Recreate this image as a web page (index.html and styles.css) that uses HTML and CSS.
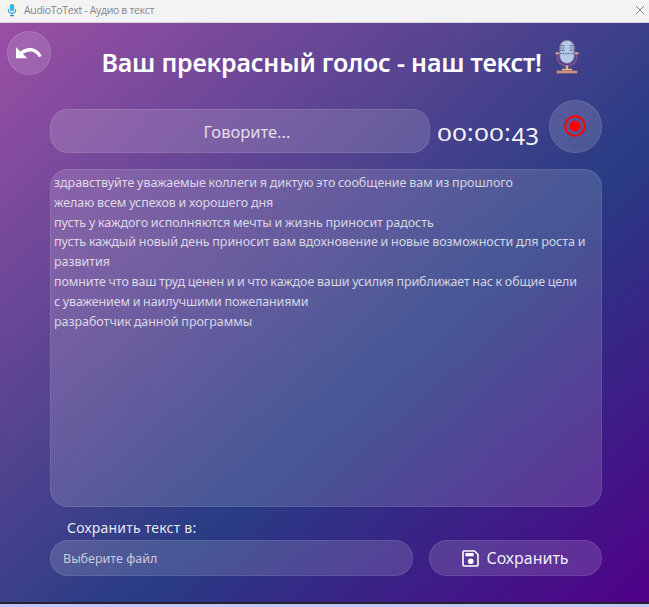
FILE: index.html
```html
<!DOCTYPE html>
<html lang="ru">
<head>
<meta charset="utf-8">
<title>AudioToText - Аудио в текст</title>
<link rel="stylesheet" href="styles.css">
</head>
<body>
<header class="titlebar">
  <svg class="app-icon" viewBox="0 0 12 14"><rect width="12" height="14" rx="2" fill="#fdf7e2"/><rect x="3.7" y="1" width="4.6" height="7.2" rx="2.3" fill="#35b4ed"/><path d="M2.3 6v1a3.7 3.2 0 0 0 7.4 0V6M6 10v2.5M3.8 12.6h4.4" fill="none" stroke="#2a96d8" stroke-width="1.1"/></svg>
  <span class="window-title">AudioToText - Аудио в текст</span>
  <svg class="close" viewBox="0 0 10 10"><path d="M1 1l8 8M9 1L1 9" fill="none" stroke="#858585" stroke-width="1"/></svg>
</header>
<main class="app">
  <div class="heading">
    <button class="back" aria-label="Назад"><svg viewBox="0 0 28 16"><path d="M1 2.2v11h11.2L7.9 9.1C12.5 5.1 20.5 5.2 23.8 12.2L26.7 10.9C22.8 1.9 12 .5 5.4 6.6Z" fill="#fff"/></svg></button>
    <h1>Ваш прекрасный голос - наш текст!</h1>
    <svg class="mic" viewBox="0 0 26 36">
      <path d="M3.2 14v3c0 6 4 9.8 9.8 9.8s9.8-3.8 9.8-9.8v-3" fill="none" stroke="#795493" stroke-width="1.7"/>
      <path d="M1.5 14.2h4M20.5 14.2h4" stroke="#dca18f" stroke-width="2"/>
      <rect x="5.7" y="1.3" width="14.6" height="23.2" rx="7.3" fill="#b5cae6" stroke="#876c9e" stroke-width="1"/>
      <path d="M6 6.6h4.6M6 9h4.6M6 11.4h4.6M15.4 6.6H20M15.4 9H20M15.4 11.4H20" stroke="#76769f" stroke-width="1.1"/>
      <path d="M6 14.5h14" stroke="#68749d" stroke-width="1.4" stroke-dasharray="1.5 1"/>
      <path d="M13 26.5v4M8 31h10" stroke="#edb681" stroke-width="2.4"/>
      <rect x="2.5" y="31.7" width="21" height="2.6" rx="1" fill="#d69b83" stroke="#81577e" stroke-width=".7"/>
    </svg>
  </div>
  <div class="record-row">
    <div class="status glass">Говорите...</div>
    <div class="timer"><span class="zeros">00</span><span class="colon">:</span><span class="zeros">00</span><span class="colon">:</span><span class="low">43</span></div>
    <button class="record glass" aria-label="Запись"><svg viewBox="0 0 24 24"><circle cx="12" cy="12" r="9.7" fill="none" stroke="#f00" stroke-width="2"/><circle cx="12" cy="12" r="5.6" fill="#f00"/></svg></button>
  </div>
  <div class="transcript glass">
    <div>здравствуйте уважаемые коллеги я диктую это сообщение вам из прошлого</div>
    <div>желаю всем успехов и хорошего дня</div>
    <div>пусть у каждого исполняются мечты и жизнь приносит радость</div>
    <div>пусть каждый новый день приносит вам вдохновение и новые возможности для роста и</div>
    <div>развития</div>
    <div class="tight">помните что ваш труд ценен и и что каждое ваши усилия приближает нас к общие цели</div>
    <div class="tight">с уважением и наилучшими пожеланиями</div>
    <div>разработчик данной программы</div>
  </div>
  <div class="save-label">Сохранить текст в:</div>
  <div class="save-row">
    <div class="file glass">Выберите файл</div>
    <button class="save glass"><svg viewBox="0 0 17 17"><path d="M2 1h10.5L16 4.5V15a1 1 0 0 1-1 1H2a1 1 0 0 1-1-1V2a1 1 0 0 1 1-1Z" fill="none" stroke="#fff" stroke-width="1.6"/><rect x="3.4" y="3" width="8.2" height="3.3" fill="#fff"/><circle cx="8.7" cy="11.2" r="2.8" fill="#fff"/></svg><span>Сохранить</span></button>
  </div>
</main>
<footer class="desktop-edge"></footer>
</body>
</html>
```
FILE: styles.css
```css
* { box-sizing: border-box; }
body { margin: 0; height: 607px; overflow: hidden; display: flex; flex-direction: column; font-family: "Noto Sans", "Open Sans", sans-serif; background: #c0c6f5; }
button { font: inherit; color: inherit; padding: 0; margin: 0; }
svg { display: block; }
.titlebar { height: 23px; flex: none; background: #f3f3f3; border-bottom: 1px solid #d9d3dc; display: flex; align-items: center; padding: 0 4px 3px 6px; color: #858585; }
.app-icon { width: 12px; height: 14px; }
.window-title { margin-left: 6px; font: 10.5px/16px "Open Sans", sans-serif; letter-spacing: -.33px; flex: 1; }
.close { width: 10px; height: 10px; }
.app { height: 579px; flex: none; padding: 0 47px 0 50px; color: #fff; background: linear-gradient(to bottom right, #9b4fa5 0%, #283c84 60%, #500088 100%); }
.heading { height: 77px; display: flex; margin-left: -43px; }
.back { width: 44px; height: 44px; margin-top: 8px; border-radius: 50%; border: 1px solid rgba(255,255,255,.12); background: rgba(255,255,255,.13); display: grid; place-items: center; flex: none; }
.back svg { width: 28px; height: 16px; }
h1 { margin: 19px 0 0 50.5px; width: 441.5px; flex: none; font-size: 25px; line-height: 40px; font-weight: 600; letter-spacing: -.2px; white-space: nowrap; }
.mic { width: 26px; height: 36px; margin: 16px 0 0 11px; flex: none; }
.glass { background: rgba(255,255,255,.14); border: 1px solid rgba(255,255,255,.09); }
.record-row { display: flex; height: 53px; }
.status { width: 380px; flex: none; height: 44px; margin-top: 9px; border-radius: 18px; text-align: center; font-size: 16.5px; line-height: 43px; padding-left: 14px; color: rgba(255,255,255,.8); }
.timer { width: 103px; flex: none; height: 32px; margin: 16px 0 0 7px; display: flex; font-size: 24px; line-height: 32px; color: rgba(255,255,255,.95); }
.timer span { display: block; flex: none; transform-origin: 0 25px; }
.zeros { width: 30px; transform: scale(1.09, .78); }
.colon { width: 7.3px; transform: scaleY(.95); }
.low { width: 28px; transform: translateY(3.5px); }
.record { width: 53px; height: 53px; flex: none; margin-left: 9px; border-radius: 50%; display: grid; place-items: center; padding: 0 1px 1px 0; }
.record svg { width: 24px; height: 24px; }
.transcript { width: 552px; height: 338px; margin-top: 16px; padding: 3px; border-radius: 18px; font-size: 12.5px; line-height: 19.8px; letter-spacing: -.05px; word-spacing: -.4px; color: rgba(255,255,255,.76); white-space: nowrap; }
.tight { letter-spacing: -.11px; }
.save-label { height: 33px; padding: 9px 0 0 17px; font-size: 14px; line-height: 24px; letter-spacing: .22px; color: rgba(255,255,255,.9); }
.save-row { display: flex; gap: 16px; height: 36px; }
.file { width: 363px; border-radius: 18px; padding-left: 12px; font-size: 12.5px; line-height: 35px; color: rgba(255,255,255,.7); }
.save { width: 173px; border-radius: 18px; display: flex; align-items: center; justify-content: center; gap: 7px; font-size: 16px; color: rgba(255,255,255,.93); }
.save svg { width: 17px; height: 17px; }
.desktop-edge { height: 5px; border-top: 2px solid #26212b; background: #c0c6f7; }
```
